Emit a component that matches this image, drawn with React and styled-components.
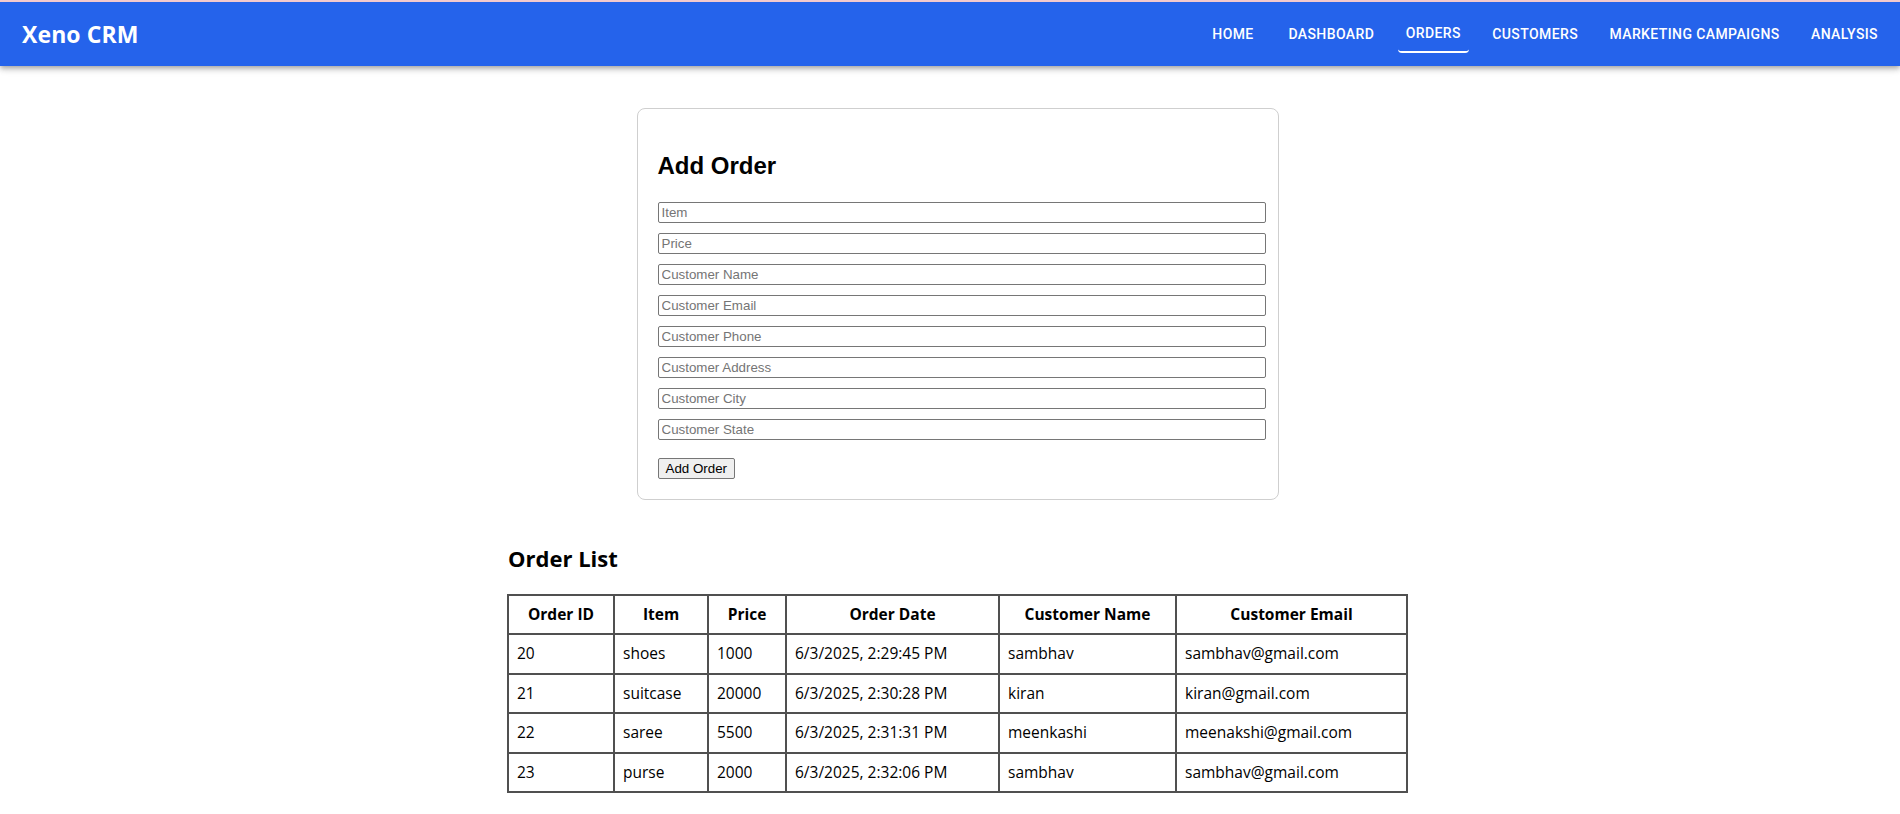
import React from 'react';
import styled, { createGlobalStyle } from 'styled-components';

const GlobalStyle = createGlobalStyle`
  body {
    margin: 0;
    background: #ffffff;
    font-family: "Open Sans", "Noto Sans", sans-serif;
    color: #000;
  }
`;

const AppBar = styled.header`
  display: flex;
  align-items: center;
  justify-content: space-between;
  height: 64px;
  padding: 0 14px 0 22px;
  background: #2563eb;
  border-top: 2px solid #f3c9cd;
  box-shadow: 0 2px 4px -1px rgba(0, 0, 0, 0.2), 0 4px 5px 0 rgba(0, 0, 0, 0.14),
    0 1px 10px 0 rgba(0, 0, 0, 0.12);
  position: relative;
  z-index: 1;
`;

const Brand = styled.div`
  font-family: "Open Sans", "Noto Sans", sans-serif;
  font-weight: 700;
  font-size: 23px;
  color: #fff;
  letter-spacing: 0.1px;
`;

const Nav = styled.nav`
  display: flex;
  align-items: center;
  gap: 15.4px;
`;

const NavLink = styled.a`
  min-width: 64px;
  box-sizing: border-box;
  padding: 6px 8px;
  text-align: center;
  font-family: Roboto, "Liberation Sans", sans-serif;
  font-weight: 500;
  font-size: 14px;
  line-height: 1.75;
  letter-spacing: 0.4px;
  text-transform: uppercase;
  color: #fff;
  border-radius: 4px;
  border-bottom: ${(p) => (p.$active ? '2px solid #fff' : 'none')};
  cursor: pointer;
`;

const Main = styled.main`
  display: flex;
  flex-direction: column;
  align-items: center;
  padding-left: 15px;
`;

const Card = styled.section`
  width: 600px;
  margin-top: 42px;
  padding: 20px;
  border: 1px solid #cfcfcf;
  border-radius: 8px;
  font-family: "Liberation Sans", Arial, sans-serif;
`;

const CardTitle = styled.h2`
  margin: 23px 0 22px;
  font-size: 24px;
  font-weight: 700;
`;

const Field = styled.input`
  display: block;
  box-sizing: border-box;
  width: calc(100% + 8px);
  height: 21px;
  margin: 0 0 10px;
  padding: 0 3px;
  border: 1px solid #767676;
  border-radius: 2px;
  font-family: "Liberation Sans", Arial, sans-serif;
  font-size: 13.33px;
  &::placeholder {
    color: #757575;
  }
`;

const SubmitButton = styled.button`
  display: block;
  height: 21px;
  margin-top: 18px;
  padding: 0 7px;
  border: 1px solid #767676;
  border-radius: 2px;
  background: #efefef;
  font-family: "Liberation Sans", Arial, sans-serif;
  font-size: 13.33px;
  color: #000;
`;

const ListTitle = styled.h2`
  align-self: center;
  width: 899px;
  margin: 43px 0 21px;
  font-size: 22px;
  line-height: 30px;
  font-weight: 700;
`;

const Table = styled.table`
  width: 899px;
  table-layout: fixed;
  border-collapse: collapse;
  font-size: 15.5px;
  line-height: 21.4px;
`;

const Col = styled.col`
  width: ${(p) => p.$w}px;
`;

const HeadCell = styled.th`
  padding: 8px;
  border: 2px solid #505050;
  font-weight: 700;
  text-align: center;
`;

const Cell = styled.td`
  padding: 8px;
  border: 2px solid #505050;
  white-space: nowrap;
`;

const links = ['Home', 'Dashboard', 'Orders', 'Customers', 'Marketing Campaigns', 'Analysis'];

const fields = [
  'Item',
  'Price',
  'Customer Name',
  'Customer Email',
  'Customer Phone',
  'Customer Address',
  'Customer City',
  'Customer State',
];

const columns = [
  ['Order ID', 106],
  ['Item', 94],
  ['Price', 78],
  ['Order Date', 213],
  ['Customer Name', 177],
  ['Customer Email', 231],
];

const orders = [
  [20, 'shoes', 1000, '6/3/2025, 2:29:45 PM', 'sambhav', 'sambhav@gmail.com'],
  [21, 'suitcase', 20000, '6/3/2025, 2:30:28 PM', 'kiran', 'kiran@gmail.com'],
  [22, 'saree', 5500, '6/3/2025, 2:31:31 PM', 'meenkashi', 'meenakshi@gmail.com'],
  [23, 'purse', 2000, '6/3/2025, 2:32:06 PM', 'sambhav', 'sambhav@gmail.com'],
];

export default function App() {
  return (
    <>
      <GlobalStyle />
      <AppBar>
        <Brand>Xeno CRM</Brand>
        <Nav>
          {links.map((l) => (
            <NavLink key={l} $active={l === 'Orders'}>{l}</NavLink>
          ))}
        </Nav>
      </AppBar>
      <Main>
        <Card>
          <CardTitle>Add Order</CardTitle>
          <form onSubmit={(e) => e.preventDefault()}>
            {fields.map((f) => (
              <Field key={f} type="text" placeholder={f} />
            ))}
            <SubmitButton type="submit">Add Order</SubmitButton>
          </form>
        </Card>
        <ListTitle>Order List</ListTitle>
        <Table>
          <colgroup>
            {columns.map(([name, w]) => (
              <Col key={name} $w={w} />
            ))}
          </colgroup>
          <thead>
            <tr>
              {columns.map(([name]) => (
                <HeadCell key={name}>{name}</HeadCell>
              ))}
            </tr>
          </thead>
          <tbody>
            {orders.map((row) => (
              <tr key={row[0]}>
                {row.map((v, i) => (
                  <Cell key={i}>{v}</Cell>
                ))}
              </tr>
            ))}
          </tbody>
        </Table>
      </Main>
    </>
  );
}
